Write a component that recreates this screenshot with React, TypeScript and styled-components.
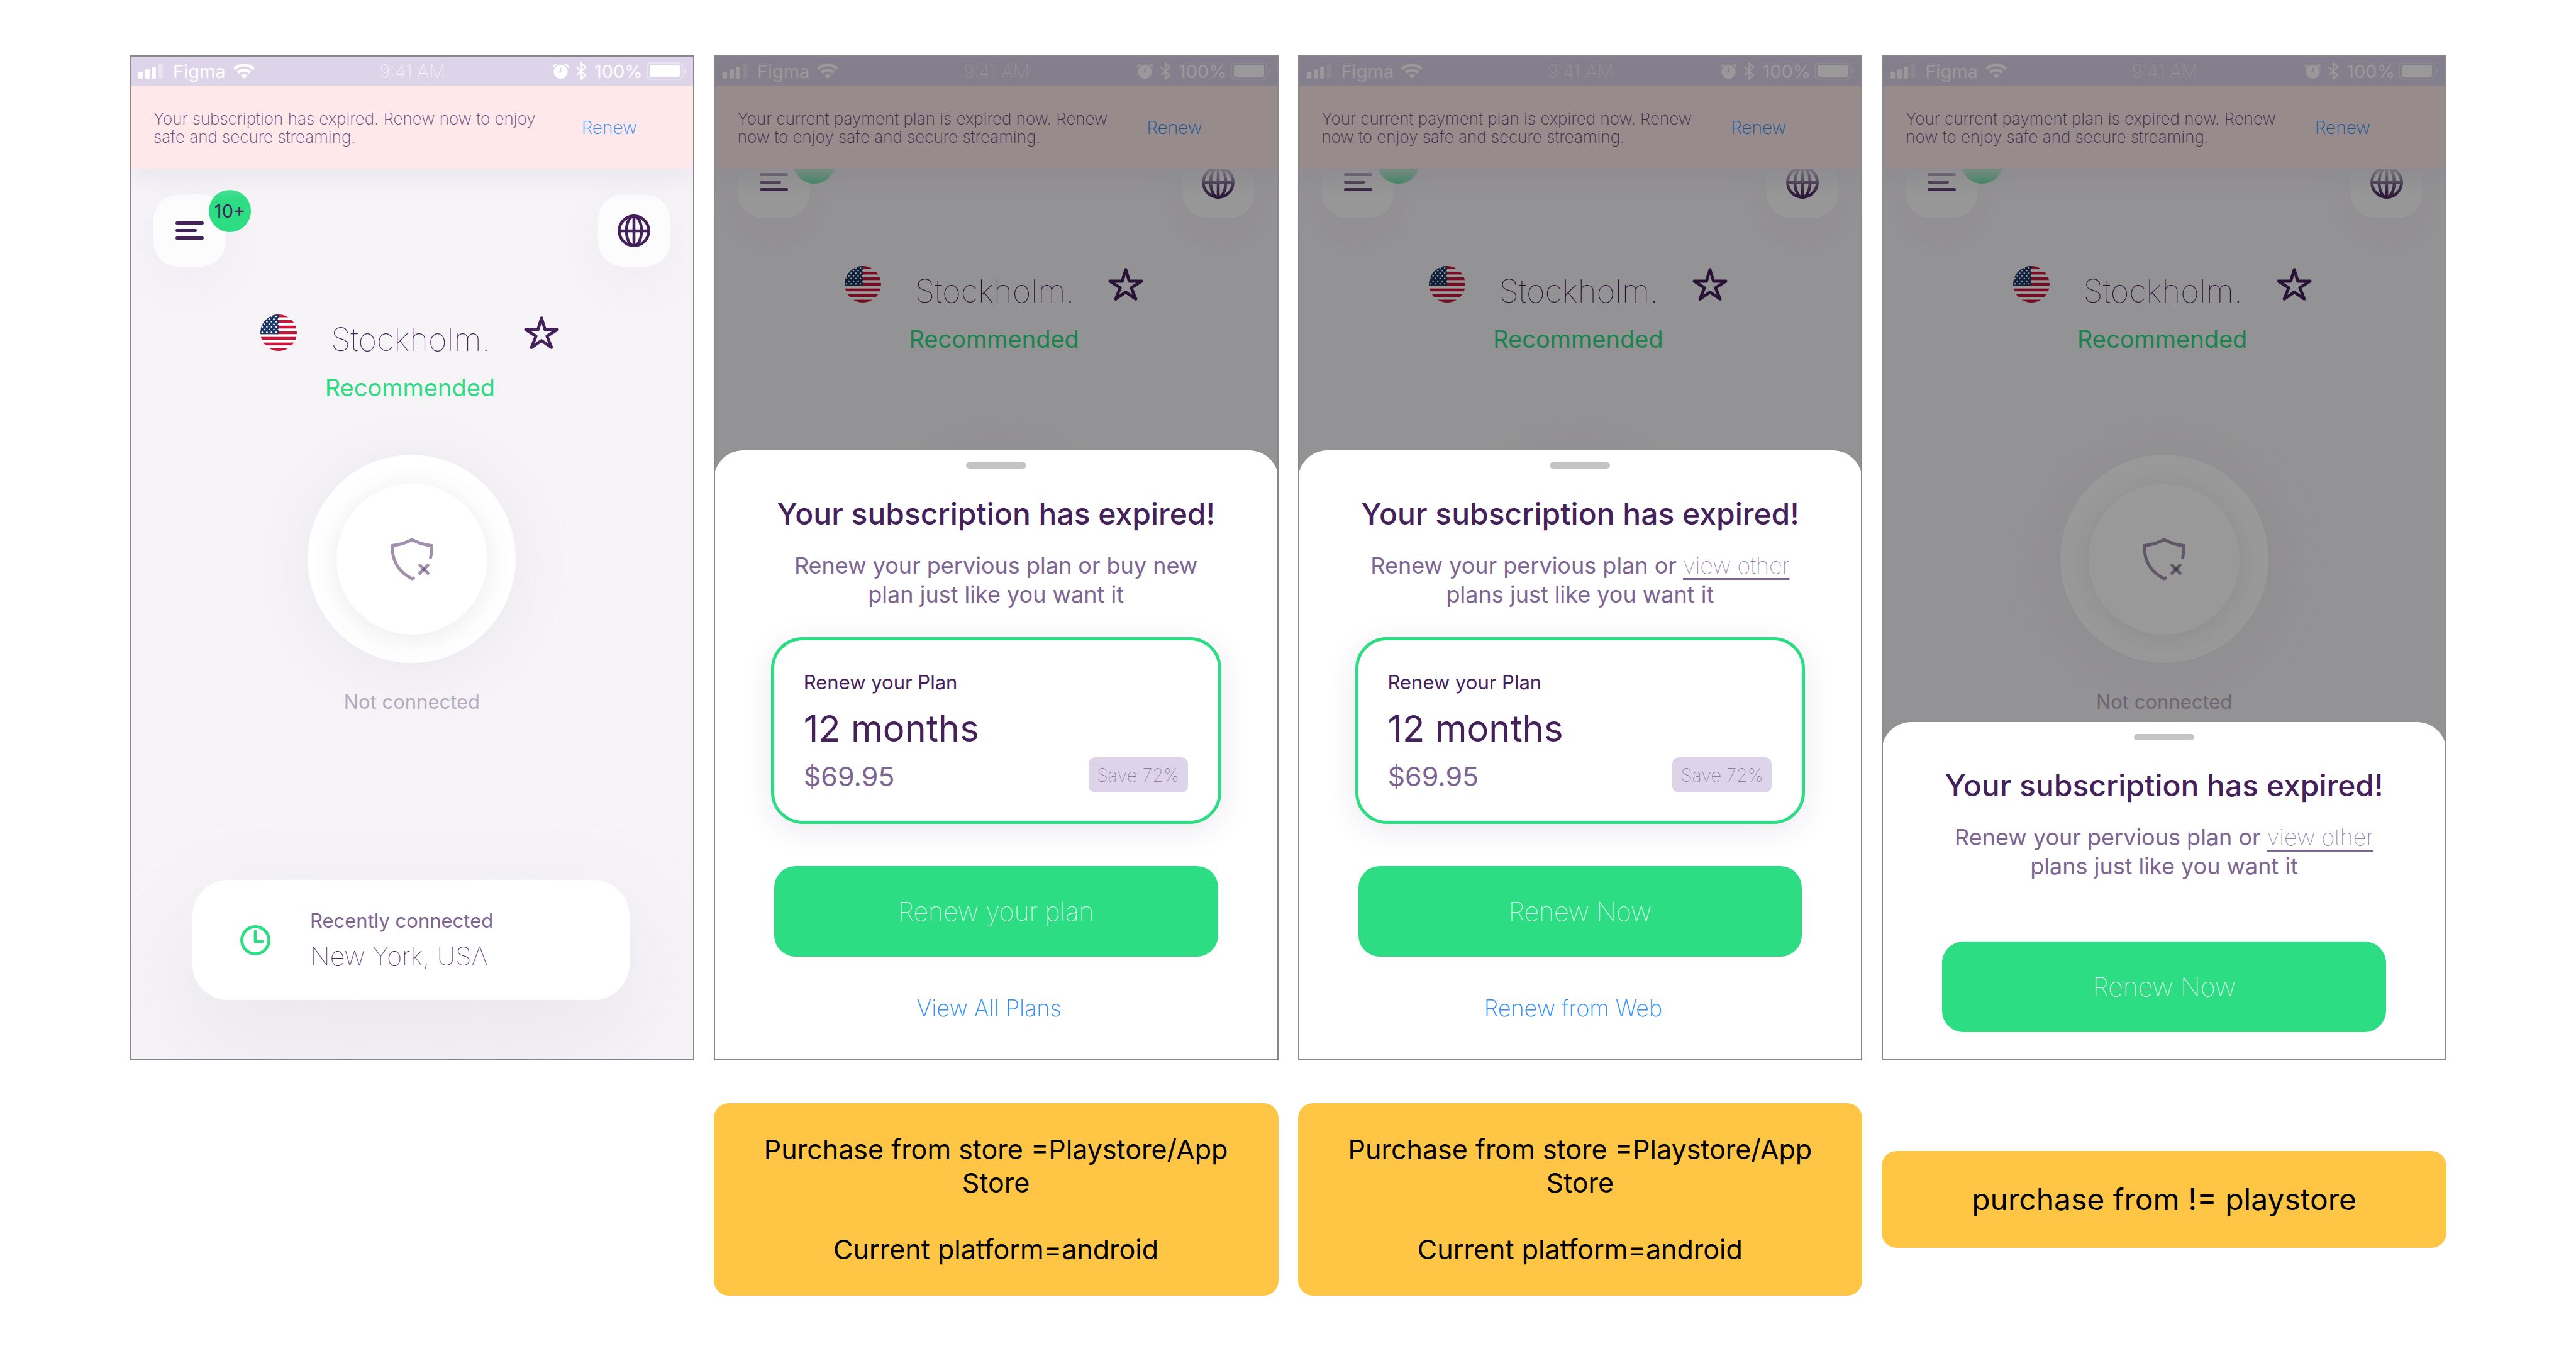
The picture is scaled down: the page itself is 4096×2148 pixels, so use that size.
import React from "react";
import styled, { createGlobalStyle } from "styled-components";

const color = {
  ink: "#44215b",
  muted: "#7d6591",
  soft: "#6a4c7f",
  green: "#2cdd83",
  lilac: "#ddd4e9",
  blush: "#fee8ea",
  canvas: "#f6f4f7",
  link: "#2c90fb",
  note: "#ffc645",
};

const GlobalStyle = createGlobalStyle`
  *, *::before, *::after { box-sizing: border-box; }
  body {
    margin: 0;
    background: #ffffff;
    color: ${color.ink};
    font-family: Inter, "Liberation Sans", sans-serif;
  }
  h2, h3, p { margin: 0; font-weight: 400; }
  button { border: 0; padding: 0; background: none; font: inherit; color: inherit; cursor: pointer; }
  svg { display: block; flex: none; }
`;

const Board = styled.main`
  display: grid;
  grid-template-columns: repeat(4, minmax(0, 1fr));
  column-gap: 31px;
  row-gap: 68px;
  align-items: center;
  padding: 88px 206px;
`;

const Phone = styled.section`
  position: relative;
  align-self: stretch;
  display: flex;
  flex-direction: column;
  overflow: hidden;
  border: 2px solid #88868a;
  background: ${color.canvas};
`;

const StatusBar = styled.div`
  display: grid;
  grid-template-columns: 1fr auto 1fr;
  align-items: center;
  height: 46px;
  padding: 0 10px 0 12px;
  background: ${color.lilac};
  color: #ffffff;
  font-size: 29px;
  line-height: 35px;
`;

const StatusGroup = styled.div<{ $gap: number; $end?: boolean }>`
  display: flex;
  align-items: center;
  justify-content: ${(p) => (p.$end ? "flex-end" : "flex-start")};
  gap: ${(p) => p.$gap}px;
`;

const Clock = styled.span`
  font-weight: 100;
`;

const Banner = styled.div<{ $inset: number }>`
  position: relative;
  z-index: 1;
  display: flex;
  align-items: center;
  justify-content: space-between;
  padding: 38px ${(p) => p.$inset}px 36px 36px;
  background: ${color.blush};
  box-shadow: 0 20px 30px rgba(233, 231, 238, 0.9);
`;

const BannerText = styled.p`
  font-size: 26px;
  line-height: 29px;
  font-weight: 200;
  color: ${color.soft};
`;

const BannerAction = styled.button`
  font-size: 28px;
  line-height: 34px;
  font-weight: 200;
  color: ${color.link};
`;

const Nav = styled.nav<{ $tucked?: boolean }>`
  display: flex;
  justify-content: space-between;
  margin-top: ${(p) => (p.$tucked ? -36 : 41)}px;
  padding: 0 36px;
`;

const IconButton = styled.button`
  position: relative;
  display: grid;
  place-items: center;
  width: 115px;
  height: 115px;
  border-radius: 40px;
  background: #fcfcfc;
  box-shadow: 0 24px 60px rgba(224, 219, 240, 0.3);
`;

const Badge = styled.span`
  position: absolute;
  top: -7px;
  left: 88px;
  display: grid;
  place-items: center;
  width: 67px;
  height: 67px;
  border-radius: 50%;
  background: ${color.green};
  font-size: 29px;
  line-height: 35px;
`;

const Place = styled.div`
  display: flex;
  flex-direction: column;
  align-items: center;
  gap: 22px;
  margin-top: 63px;
  padding-right: 6px;
`;

const PlaceRow = styled.div`
  display: flex;
  align-items: center;
  gap: 54px;
`;

const City = styled.h2`
  padding-top: 22px;
  font-size: 51px;
  line-height: 62px;
  font-weight: 100;
`;

const Tag = styled.p`
  font-size: 38px;
  line-height: 46px;
  color: ${color.green};
`;

const Dial = styled.button<{ $tucked?: boolean }>`
  display: grid;
  place-items: center;
  align-self: center;
  width: 331px;
  height: 331px;
  margin-top: ${(p) => (p.$tucked ? 161 : 84)}px;
  border-radius: 50%;
  background: #ffffff;
  box-shadow: 0 10px 90px rgba(218, 214, 228, 0.42);
`;

const DialFace = styled.span`
  display: grid;
  place-items: center;
  width: 240px;
  height: 240px;
  border-radius: 50%;
  background: #ffffff;
  box-shadow: 0 6px 44px rgba(90, 80, 110, 0.12);
`;

const DialLabel = styled.p`
  margin-top: 43px;
  text-align: center;
  font-size: 31px;
  line-height: 38px;
  color: ${color.ink};
  opacity: 0.35;
`;

const Recent = styled.div`
  display: flex;
  align-items: center;
  gap: 63px;
  height: 191px;
  margin: 264px 101px 94px 98px;
  padding-left: 76px;
  border-radius: 57px;
  background: #ffffff;
  box-shadow: 0 60px 160px rgba(214, 210, 222, 0.42);
`;

const RecentText = styled.div`
  display: flex;
  flex-direction: column;
  gap: 12px;
`;

const RecentLabel = styled.p`
  font-size: 31px;
  line-height: 38px;
  color: ${color.muted};
`;

const RecentPlace = styled.p`
  font-size: 41px;
  line-height: 50px;
  font-weight: 100;
`;

const Scrim = styled.div`
  position: absolute;
  inset: 0;
  z-index: 2;
  background: rgba(0, 0, 0, 0.4);
`;

const Sheet = styled.div<{ $compact?: boolean }>`
  position: absolute;
  right: -2px;
  bottom: 0;
  left: -2px;
  z-index: 3;
  display: flex;
  flex-direction: column;
  align-items: stretch;
  padding: 19px 96px ${(p) => (p.$compact ? 43 : 58)}px;
  border-radius: 47px 47px 0 0;
  background: #ffffff;
  text-align: center;
`;

const Handle = styled.span`
  align-self: center;
  width: 96px;
  height: 10px;
  border-radius: 5px;
  background: #c4c4c4;
`;

const SheetTitle = styled.h2`
  margin-top: 43px;
  font-size: 48px;
  line-height: 58px;
  font-weight: 500;
  white-space: nowrap;
`;

const SheetText = styled.p`
  margin-top: 30px;
  font-size: 36px;
  line-height: 46px;
  color: ${color.muted};
`;

const InlineLink = styled.a`
  color: inherit;
  font-weight: 100;
  text-decoration: underline;
  text-decoration-thickness: 3px;
  text-underline-offset: 7px;
  text-decoration-skip-ink: none;
`;

const PlanCard = styled.div`
  display: flex;
  flex-direction: column;
  margin: 45px -5px 0;
  padding: 48px 48px 45px 47px;
  border: 5px solid ${color.green};
  border-radius: 50px;
  background: #ffffff;
  box-shadow: 0 10px 48px rgba(68, 33, 91, 0.1);
  text-align: left;
`;

const PlanLabel = styled.p`
  font-size: 31px;
  line-height: 38px;
`;

const PlanName = styled.h3`
  margin-top: 20px;
  font-size: 58px;
  line-height: 69px;
`;

const PlanRow = styled.div`
  display: flex;
  align-items: flex-end;
  justify-content: space-between;
  margin-top: 11px;
`;

const Price = styled.p`
  font-size: 43px;
  line-height: 52px;
  color: ${color.muted};
`;

const Saving = styled.span`
  display: grid;
  place-items: center;
  width: 158px;
  height: 56px;
  border-radius: 10px;
  background: ${color.lilac};
  color: ${color.muted};
  font-size: 29px;
  line-height: 35px;
  font-weight: 100;
`;

const PrimaryButton = styled.button<{ $gap: number }>`
  height: 144px;
  margin-top: ${(p) => p.$gap}px;
  border-radius: 34px;
  background: ${color.green};
  color: #ffffff;
  font-size: 41px;
  line-height: 50px;
  font-weight: 100;
`;

const SecondaryLink = styled.a`
  align-self: center;
  margin-top: 59px;
  padding-right: 22px;
  font-size: 36px;
  line-height: 46px;
  font-weight: 200;
  color: ${color.link};
  text-decoration: none;
`;

const Note = styled.p<{ $column: number; $large?: boolean }>`
  grid-column: ${(p) => p.$column};
  padding: ${(p) => (p.$large ? 48 : 47)}px 40px;
  border-radius: 24px;
  background: ${color.note};
  color: #000000;
  text-align: center;
  font-size: ${(p) => (p.$large ? 48 : 43)}px;
  line-height: ${(p) => (p.$large ? 58 : 53)}px;
`;

const SignalIcon = () => (
  <svg width="39" height="24" viewBox="0 0 39 24" fill="#fff" aria-hidden="true">
    <rect x="0" y="13" width="7" height="11" rx="2" />
    <rect x="11" y="9" width="7" height="15" rx="2" />
    <rect x="21" y="5" width="7" height="19" rx="2" />
    <rect x="32" y="0" width="7" height="24" rx="2" opacity="0.35" />
  </svg>
);

const WifiIcon = () => (
  <svg width="34" height="24" viewBox="0 0 34 24" aria-hidden="true">
    <g fill="none" stroke="#fff" strokeWidth="4.6">
      <path d="M1.6 8.6a22 22 0 0 1 30.8 0" />
      <path d="M7.2 14.4a14 14 0 0 1 19.6 0" />
    </g>
    <path d="M11.8 18.8a7.6 7.6 0 0 1 10.4 0L17 24z" fill="#fff" />
  </svg>
);

const AlarmIcon = () => (
  <svg width="25" height="23" viewBox="0 0 25 23" aria-hidden="true">
    <circle cx="12.5" cy="12" r="11" fill="#fff" />
    <path d="M1.2 5.4 A3.4 3.4 0 0 1 5.8 1.4M23.8 5.4A3.4 3.4 0 0 0 19.2 1.4" stroke="#fff" strokeWidth="2.4" fill="none" />
    <path d="M12.7 5.6v6.8H8.4" stroke={color.lilac} strokeWidth="1.8" fill="none" />
  </svg>
);

const BluetoothIcon = () => (
  <svg width="17" height="28" viewBox="0 0 17 28" aria-hidden="true">
    <path d="M1 7.6l14 12.8-6.6 6V1.6l6.6 6L1 20.4" fill="none" stroke="#fff" strokeWidth="2.3" />
  </svg>
);

const BatteryIcon = () => (
  <svg width="64" height="28" viewBox="0 0 64 28" aria-hidden="true">
    <rect x="1" y="1" width="56" height="26" rx="6" fill="none" stroke="#fff" strokeOpacity="0.35" strokeWidth="2" />
    <rect x="5" y="5" width="48" height="18" rx="2" fill="#fff" />
    <path d="M60 9.5c2 .8 3.4 2.4 3.4 4.5s-1.4 3.7-3.4 4.5z" fill="#fff" opacity="0.4" />
  </svg>
);

const MenuIcon = () => (
  <svg width="45" height="29" viewBox="0 0 45 29" aria-hidden="true">
    <path d="M2.5 2.5h40M2.5 14.5h29M2.5 26.5h40" stroke={color.ink} strokeWidth="5" strokeLinecap="round" />
  </svg>
);

const GlobeIcon = () => (
  <svg width="52" height="52" viewBox="0 0 52 52" fill="none" stroke={color.ink} strokeWidth="4.6" aria-hidden="true">
    <circle cx="26" cy="26" r="23.6" />
    <ellipse cx="26" cy="26" rx="12" ry="23.6" />
    <path d="M26 2.4v47.2M2.4 26h47.2" />
  </svg>
);

const StarIcon = () => (
  <svg width="56" height="52" viewBox="0 0 56 52" fill="none" stroke={color.ink} strokeWidth="4.8" strokeLinejoin="round" aria-hidden="true">
    <path d="M28 2.6l5.6 18.4h19.6L36.8 31.6 44 49.4 28 38.4 12 49.4l7.2-17.8L2.8 21h19.6z" />
  </svg>
);

const ShieldIcon = () => (
  <svg width="68" height="68" viewBox="0 0 68 68" fill="none" aria-hidden="true">
    <g stroke={color.ink} strokeOpacity="0.5" strokeWidth="4.8">
      <path d="M38.5 63.2L34 65C16 56 2.4 40 2.4 12.4C13 11.4 24 8.2 34 3C44 8.2 55 11.4 65.6 12.4C65.9 20 65.2 26.5 63.2 33" strokeLinejoin="round" />
      <path d="M46.5 43.5L59.5 56.5" strokeLinecap="round" />
      <path d="M59.5 43.5L46.5 56.5" strokeLinecap="round" />
    </g>
  </svg>
);

const HistoryIcon = () => (
  <svg width="48" height="48" viewBox="0 0 48 48" fill="none" stroke={color.green} strokeWidth="4.8" aria-hidden="true">
    <circle cx="24" cy="24" r="21.6" />
    <path d="M24 10v16h11" strokeLinecap="round" strokeLinejoin="round" />
  </svg>
);

const stripes = [0, 2, 4, 6, 8, 10, 12];
const starRows = [0, 1, 2, 3, 4, 5, 6];

const FlagIcon = ({ id }: { id: string }) => (
  <svg width="58" height="58" viewBox="0 0 58 58" role="img" aria-label="USA">
    <clipPath id={id}>
      <circle cx="29" cy="29" r="29" />
    </clipPath>
    <g clipPath={`url(#${id})`}>
      <rect width="58" height="58" fill="#fff" />
      {stripes.map((i) => (
        <rect key={i} y={(i * 58) / 13} width="58" height={58 / 13} fill="#c8153b" />
      ))}
      <rect width="29" height={(58 * 7) / 13} fill="#1c3765" />
      {starRows.map((row) =>
        [0, 1, 2, 3].map((col) => (
          <circle
            key={`${row}-${col}`}
            cx={3 + col * 7.4 + (row % 2 ? 3.7 : 0)}
            cy={3 + row * 4.2}
            r="1.3"
            fill="#fff"
          />
        ))
      )}
    </g>
  </svg>
);

type ScreenProps = {
  id: string;
  message: React.ReactNode;
  bannerInset: number;
  tucked?: boolean;
  label?: boolean;
  recent?: boolean;
  children?: React.ReactNode;
};

const Screen = ({ id, message, bannerInset, tucked, label, recent, children }: ScreenProps) => (
  <Phone>
    <StatusBar>
      <StatusGroup $gap={16}>
        <SignalIcon />
        <StatusGroup $gap={12}>
          <span>Figma</span>
          <WifiIcon />
        </StatusGroup>
      </StatusGroup>
      <Clock>9:41 AM</Clock>
      <StatusGroup $gap={12} $end>
        <AlarmIcon />
        <BluetoothIcon />
        <StatusGroup $gap={6}>
          <span>100%</span>
          <BatteryIcon />
        </StatusGroup>
      </StatusGroup>
    </StatusBar>
    <Banner $inset={bannerInset}>
      <BannerText>{message}</BannerText>
      <BannerAction type="button">Renew</BannerAction>
    </Banner>
    <Nav $tucked={tucked}>
      <IconButton type="button" aria-label="Menu">
        <MenuIcon />
        <Badge>{tucked ? null : "10+"}</Badge>
      </IconButton>
      <IconButton type="button" aria-label="Locations">
        <GlobeIcon />
      </IconButton>
    </Nav>
    <Place>
      <PlaceRow>
        <FlagIcon id={`flag-${id}`} />
        <City>Stockholm.</City>
        <StarIcon />
      </PlaceRow>
      <Tag>Recommended</Tag>
    </Place>
    <Dial type="button" aria-label="Connect" $tucked={tucked}>
      <DialFace>
        <ShieldIcon />
      </DialFace>
    </Dial>
    {label && <DialLabel>Not connected</DialLabel>}
    {recent && (
      <Recent>
        <HistoryIcon />
        <RecentText>
          <RecentLabel>Recently connected</RecentLabel>
          <RecentPlace>New York, USA</RecentPlace>
        </RecentText>
      </Recent>
    )}
    {children}
  </Phone>
);

const Plan = () => (
  <PlanCard>
    <PlanLabel>Renew your Plan</PlanLabel>
    <PlanName>12 months</PlanName>
    <PlanRow>
      <Price>$69.95</Price>
      <Saving>Save 72%</Saving>
    </PlanRow>
  </PlanCard>
);

const OtherPlans = () => (
  <SheetText>
    Renew your pervious plan or <InlineLink href="#plans">view other</InlineLink>
    <br />
    plans just like you want it
  </SheetText>
);

const paymentMessage = (
  <>
    Your current payment plan is expired now. Renew
    <br />
    now to enjoy safe and secure streaming.
  </>
);

const storeNote = (
  <>
    Purchase from store =Playstore/App
    <br />
    Store
    <br />
    <br />
    Current platform=android
  </>
);

export default function App() {
  return (
    <>
      <GlobalStyle />
      <Board>
        <Screen
          id="home"
          bannerInset={89}
          label
          recent
          message={
            <>
              Your subscription has expired. Renew now to enjoy
              <br />
              safe and secure streaming.
            </>
          }
        />

        <Screen id="store" bannerInset={119} tucked message={paymentMessage}>
          <Scrim />
          <Sheet>
            <Handle />
            <SheetTitle>Your subscription has expired!</SheetTitle>
            <SheetText>
              Renew your pervious plan or buy new
              <br />
              plan just like you want it
            </SheetText>
            <Plan />
            <PrimaryButton type="button" $gap={67}>Renew your plan</PrimaryButton>
            <SecondaryLink href="#all-plans">View All Plans</SecondaryLink>
          </Sheet>
        </Screen>

        <Screen id="web" bannerInset={119} tucked message={paymentMessage}>
          <Scrim />
          <Sheet>
            <Handle />
            <SheetTitle>Your subscription has expired!</SheetTitle>
            <OtherPlans />
            <Plan />
            <PrimaryButton type="button" $gap={67}>Renew Now</PrimaryButton>
            <SecondaryLink href="#web">Renew from Web</SecondaryLink>
          </Sheet>
        </Screen>

        <Screen id="other" bannerInset={119} tucked label message={paymentMessage}>
          <Scrim />
          <Sheet $compact>
            <Handle />
            <SheetTitle>Your subscription has expired!</SheetTitle>
            <OtherPlans />
            <PrimaryButton type="button" $gap={97}>Renew Now</PrimaryButton>
          </Sheet>
        </Screen>

        <Note $column={2}>{storeNote}</Note>
        <Note $column={3}>{storeNote}</Note>
        <Note $column={4} $large>purchase from != playstore</Note>
      </Board>
    </>
  );
}
